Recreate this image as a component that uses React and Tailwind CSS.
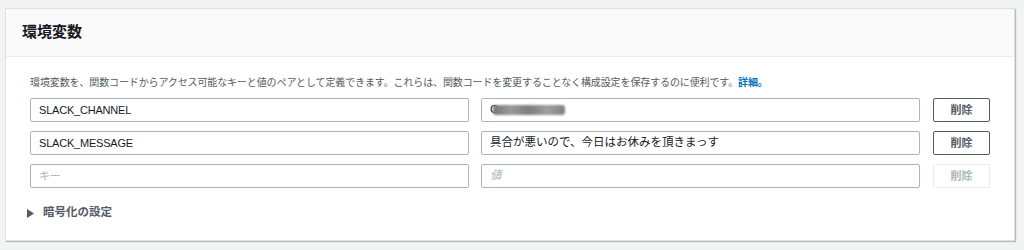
import React from "react";

const jp = "font-['Liberation_Sans','Noto_Sans_CJK_JP',sans-serif]";

function Row({ k, v, placeholder, blurred }) {
  return (
    <div className="flex items-center h-[24px]">
      <div className="flex-1 h-full border border-[#aab7b8] rounded-[2px] bg-white flex items-center px-[8px] text-[11px] text-[#16191f] tracking-[-0.2px]">
        {k ? (
          <span>{k}</span>
        ) : (
          <span className="text-[#aab7b8]">キー</span>
        )}
      </div>
      <div className="flex-1 h-full ml-3 border border-[#aab7b8] rounded-[2px] bg-white flex items-center px-[8px] text-[11.5px] text-[#16191f]">
        {blurred ? (
          <span className="flex items-center">
            <span>C</span>
            <span className="ml-[-5px] h-[10px] w-[72px] rounded-[3px] bg-[linear-gradient(90deg,#777,#9a9a9a,#7d7d7d,#a0a0a0,#808080)] blur-[1px]" />
          </span>
        ) : v ? (
          <span>{v}</span>
        ) : (
          <span className="text-[#aab7b8] italic">{placeholder}</span>
        )}
      </div>
      <button
        className={
          "ml-[13px] w-[57px] h-full rounded-[2px] border text-[11px] font-bold bg-white " +
          (k
            ? "border-[#545b64] text-[#545b64]"
            : "border-[#eaeded] text-[#aab7b8]")
        }
      >
        削除
      </button>
    </div>
  );
}

export default function App() {
  return (
    <div className={"min-h-[250px] bg-[#f2f3f3] pt-2 pl-[5px] pr-[9px] pb-2 " + jp}>
      <div className="bg-white border border-[#dde1e1] shadow-[1px_1px_1px_0_rgba(0,28,36,0.25)]">
        <div className="h-[48px] bg-[#fafafa] border-b border-[#eaeded] flex items-center px-[16px]">
          <h2 className="text-[15px] font-bold text-[#16191f]">環境変数</h2>
        </div>
        <div className="px-6 pt-[19px] pb-[19px]">
          <p className="text-[10px] leading-[14px] text-[#545b64] mb-2 tracking-[-0.12px]">
            環境変数を、関数コードからアクセス可能なキーと値のペアとして定義できます。これらは、関数コードを変更することなく構成設定を保存するのに便利です。
            <a className="text-[#0073bb] font-bold">詳細。</a>
          </p>
          <div className="flex flex-col gap-[9px]">
            <Row k="SLACK_CHANNEL" blurred />
            <Row k="SLACK_MESSAGE" v="具合が悪いので、今日はお休みを頂きまっす" />
            <Row placeholder="値" />
          </div>
          <div className="mt-[17px] flex items-center h-[16px] text-[11.5px] font-bold text-[#545b64]">
            <svg width="7" height="9" viewBox="0 0 7 9" className="ml-[-3px] mr-[9px]">
              <path d="M0 0 L7 4.5 L0 9 Z" fill="#545b64" />
            </svg>
            <span>暗号化の設定</span>
          </div>
        </div>
      </div>
    </div>
  );
}
